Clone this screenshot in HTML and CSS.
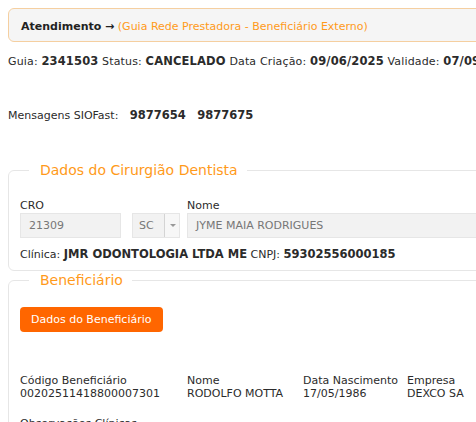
FILE: index.html
```
<!doctype html>
<html>
<head>
<meta charset="UTF-8">
<title>Guia</title>
<link rel="stylesheet" href="styles.css">
</head>
<body>
	<div class="page">
		<div class="heading">
			<b>Atendimento &rarr;</b> <span class="sub">(Guia Rede Prestadora - Beneficiário Externo)</span>
		</div>

		<p class="info">Guia: <b>2341503</b> Status: <b>CANCELADO</b> Data Criação: <b>09/06/2025</b> Validade: <b>07/09/2025</b></p>

		<p class="msgs">Mensagens SIOFast: <b>9877654</b> <b>9877675</b></p>

		<fieldset class="group first">
			<legend>Dados do Cirurgião Dentista</legend>
			<div class="fields">
				<div class="field cro">
					<label>CRO</label>
					<div class="input">21309</div>
				</div>
				<div class="field uf">
					<label>&nbsp;</label>
					<div class="select">
						<span class="val">SC</span>
						<span class="arrow"></span>
					</div>
				</div>
				<div class="field nome">
					<label>Nome</label>
					<div class="input">JYME MAIA RODRIGUES</div>
				</div>
			</div>
			<p class="clinica">Clínica: <b>JMR ODONTOLOGIA LTDA ME</b> CNPJ: <b>59302556000185</b></p>
		</fieldset>

		<fieldset class="group second">
			<legend>Beneficiário</legend>
			<button class="btn">Dados do Beneficiário</button>
			<div class="benef">
				<div class="col c1"><span>Código Beneficiário</span><span>00202511418800007301</span></div>
				<div class="col c2"><span>Nome</span><span>RODOLFO MOTTA</span></div>
				<div class="col c3"><span>Data Nascimento</span><span>17/05/1986</span></div>
				<div class="col c4"><span>Empresa</span><span>DEXCO SA</span></div>
			</div>
			<p class="obs">Observações Clínicas</p>
		</fieldset>
	</div>
</body>
</html>
```
FILE: styles.css
```
* { box-sizing: border-box }
body {
	margin: 8px;
	min-width: 900px;
	font-family: "DejaVu Sans", Verdana, sans-serif;
	font-size: 11px;
	color: #2b2b2b;
}
b { font-size: 11.5px }
.page { width: 900px }
.heading {
	height: 34px;
	padding: 3px 12px 0;
	line-height: 30px;
	font-size: 11px;
	background-color: #f5f5f5;
	border: 1px solid #f5cfa0;
	border-radius: 6px;
	color: #222;
}
.heading b { font-size: 11px }
.heading .sub { color: #ff9a1a }
.info { margin: 12px 0 0; line-height: 14px; letter-spacing: 0.15px }
.msgs { margin: 39px 0 0; line-height: 14px }
.msgs b { margin-left: 8px }
.group {
	margin: 0;
	border: 1px solid #e6e6e6;
	border-radius: 6px;
	padding: 0 11px;
}
.group legend {
	margin-left: 9px;
	padding: 0 9px 0 11px;
	font-size: 14px;
	color: #ff9a1a;
}
.first { margin-top: 39px; padding-top: 21px; padding-bottom: 8px }
.fields { display: flex; gap: 7px }
.field label { display: block; line-height: 14px; margin-bottom: 0 }
.input, .select {
	height: 25px;
	line-height: 23px;
	padding: 0 8px;
	background-color: #f2f2f2;
	border: 1px solid #e6e6e6;
	color: #777;
}
.cro { width: 101px }
.uf { width: 48px; margin-left: 4px }
.nome { flex: 1 }
.select { display: flex; padding: 0 }
.select .val { width: 31px; padding-left: 6px }
.select .arrow {
	position: relative;
	flex: 1;
	border-left: 1px solid #d4d4d4;
	background-color: #f7f7f7;
}
.select .arrow::after {
	content: "";
	position: absolute;
	left: 5px;
	top: 10px;
	border-left: 3px solid transparent;
	border-right: 3px solid transparent;
	border-top: 3px solid #999;
}
.clinica { margin: 9px 0 0; line-height: 14px }
.second { margin-top: 1px; padding-top: 19px; height: 200px }
.btn {
	display: block;
	height: 25px;
	padding: 0 11px;
	background-color: #ff6600;
	border: 0;
	border-radius: 4px;
	font-family: inherit;
	font-size: 11px;
	color: #fff;
}
.benef { display: flex; margin-top: 42px }
.col { display: flex; flex-direction: column; line-height: 13px }
.c1 { width: 167px }
.c2 { width: 116px }
.c3 { width: 104px }
.obs { margin: 17px 0 0; line-height: 14px }
```
